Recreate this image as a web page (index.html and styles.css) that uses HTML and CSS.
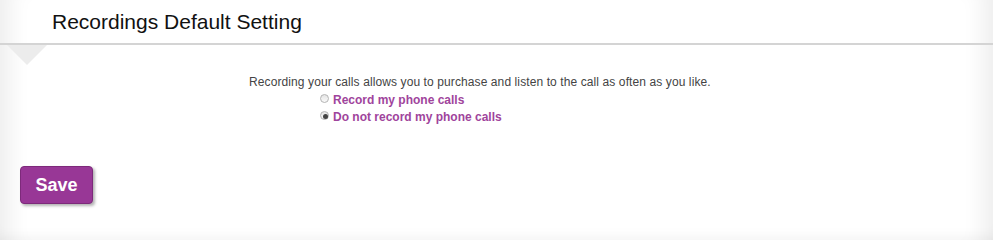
FILE: index.html
```html
<!DOCTYPE html>
<html lang="en">
<head>
  <meta charset="UTF-8">
  <title>Recordings Default Setting</title>
  <link rel="stylesheet" href="styles.css">
</head>
<body>
  <div class="panel">
    <header class="panel-head">
      <h1>Recordings Default Setting</h1>
    </header>
    <div class="notch"></div>

    <div class="setting">
      <p class="setting-desc">Recording your calls allows you to purchase and listen to the call as often as you like.</p>
      <div class="options">
        <label class="option">
          <input type="radio" name="record" value="yes">
          <span>Record my phone calls</span>
        </label>
        <label class="option">
          <input type="radio" name="record" value="no" checked>
          <span>Do not record my phone calls</span>
        </label>
      </div>
    </div>

    <div class="actions">
      <button class="btn-save" type="button">Save</button>
    </div>
  </div>
</body>
</html>
```

FILE: styles.css
```css
body {
  font-family: Arial, "Liberation Sans", sans-serif;
  margin: 0;
  background-color: #fff;
}
.panel {
  height: 240px;
  box-sizing: border-box;
  background: #fff;
  box-shadow: inset 28px 0 22px -18px rgba(0,0,0,0.07),
              inset -28px 0 22px -18px rgba(0,0,0,0.07),
              inset 0 -12px 14px -10px rgba(0,0,0,0.06);
  overflow: hidden;
}
.panel-head {
  height: 43px;
  border-bottom: 2px solid #d4d4d4;
  box-sizing: content-box;
  padding: 0 0 0 52px;
  display: flex;
  align-items: center;
}
.panel-head h1 {
  margin: 0;
  font-size: 21px;
  font-weight: normal;
  color: #111;
}
.notch {
  width: 0;
  height: 0;
  margin-left: 7px;
  border-left: 20px solid transparent;
  border-right: 20px solid transparent;
  border-top: 20px solid #ececec;
}
.setting {
  padding-left: 249px;
  margin-top: 9px;
}
.setting-desc {
  margin: 0;
  font-size: 12px;
  letter-spacing: 0.1px;
  color: #444;
  line-height: 17px;
}
.options {
  padding-left: 71px;
  display: flex;
  flex-direction: column;
}
.option {
  display: flex;
  align-items: center;
  gap: 4px;
  height: 17px;
  font-size: 12px;
  font-weight: bold;
  color: #a0449c;
}
.option input {
  appearance: none;
  -webkit-appearance: none;
  width: 9px;
  height: 9px;
  margin: 0 0 3px 0;
  border: 1px solid #b4b4b4;
  border-radius: 50%;
  background: linear-gradient(#e4e4e4, #fafafa);
  position: relative;
}
.option input:checked::after {
  content: '';
  position: absolute;
  left: 2px;
  top: 2px;
  width: 5px;
  height: 5px;
  border-radius: 50%;
  background: #444;
}
.actions {
  padding: 41px 0 0 20px;
}
.btn-save {
  width: 73px;
  height: 38px;
  background: #983796;
  color: #fff;
  font-family: Arial, "Liberation Sans", sans-serif;
  font-size: 18px;
  font-weight: bold;
  border: 1px solid #7d2a7b;
  border-radius: 4px;
  box-shadow: 2px 2px 3px rgba(0,0,0,0.3);
  cursor: pointer;
}
```
